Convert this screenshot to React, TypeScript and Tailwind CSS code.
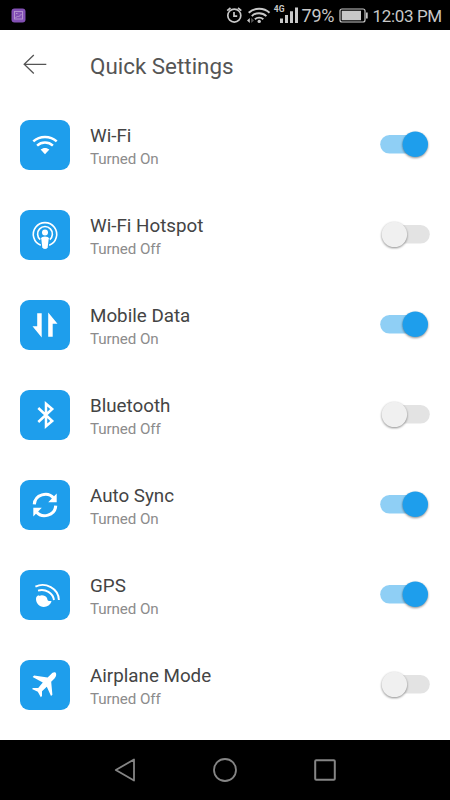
import React, { useState } from "react";

interface Setting {
  name: string;
  enabled: boolean;
  icon: React.ReactNode;
}

const WifiIcon = () => (
  <g>
    <g fill="none" stroke="white" strokeWidth="2.5">
      <path d="M13.3 21.4C19.8 15.4 30.2 15.4 36.7 21.4" />
      <path d="M17.1 25.6C21.6 21.5 28.4 21.5 32.9 25.6" />
    </g>
    <path d="M20.6 29.6C23.2 27.3 26.8 27.3 29.4 29.6L25 34.2Z" fill="white" />
  </g>
);

const HotspotIcon = () => (
  <g>
    <g fill="none" stroke="white" strokeWidth="1.6">
      <path d="M20.8 35.2A11.7 11.7 0 1 1 29.2 35.2" />
      <path d="M20.2 29.6A7.4 7.4 0 1 1 29.8 29.6" />
    </g>
    <circle cx="25" cy="22.5" r="3" fill="white" />
    <path d="M21.2 28.2Q21.6 26.6 25 26.6T28.8 28.2L27.7 37.2Q27.4 39 25 39T22.3 37.2Z" fill="white" />
  </g>
);

const DataIcon = () => (
  <path d="M17.2 13.3H21.7V37.5L12.5 26.3H17.2ZM28.2 12.5V36.7H32.7V23.7H37.5Z" fill="white" />
);

const BluetoothIcon = () => (
  <path
    d="M18.3 18L32.2 31L26 36.2V13.8L32.2 19L18.3 32"
    fill="none"
    stroke="white"
    strokeWidth="2.5"
  />
);

const SyncIcon = () => (
  <g>
    <g fill="none" stroke="white" strokeWidth="3.1">
      <path d="M14.3 24.3C14.8 14.6 27.8 10.9 33.7 18.2" />
      <path d="M35.7 25.7C35.2 35.4 22.2 39.1 16.3 31.8" />
    </g>
    <path d="M36.7 13.6V22.2H28.2ZM13.3 36.4V27.8H21.8Z" fill="white" />
  </g>
);

const GpsIcon = () => (
  <g>
    <g fill="none" stroke="white" strokeWidth="1.9">
      <path d="M15.4 16.6C25.5 11.7 38.5 18.5 38.9 30" />
      <path d="M18 20.6C25.5 18.5 33 23 34 30" />
    </g>
    <path
      d="M18.3 25.3C19.4 26.2 20.6 25.8 21.8 25.3C24 25.5 26 26.1 27 28C27.4 29.3 27.3 30 28.3 30.8C29.4 31.5 30.6 30.7 31.6 31.5C30.2 34.9 27.4 36.9 23.8 36.9C19.2 36.9 16 33.2 16 29C16 27.3 16.8 26.2 18.3 25.3Z"
      fill="white"
    />
  </g>
);

const AirplaneIcon = () => (
  <path
    d="M35.5 12.6C33.8 11.8 32.2 13 31 14.2L27.6 17.4L14.1 15.6L12.6 17.1L22.8 22.6L18.2 28H13L12 29.1L17.8 31.7L20.8 37.2L22 36.1V31.2L26.8 26.7L31 36.1L32.4 34.8L31.2 21.8L34.5 18.5C35.8 17.2 37 14.4 35.5 12.6Z"
    fill="white"
  />
);

const settings: Setting[] = [
  { name: "Wi-Fi", enabled: true, icon: <WifiIcon /> },
  { name: "Wi-Fi Hotspot", enabled: false, icon: <HotspotIcon /> },
  { name: "Mobile Data", enabled: true, icon: <DataIcon /> },
  { name: "Bluetooth", enabled: false, icon: <BluetoothIcon /> },
  { name: "Auto Sync", enabled: true, icon: <SyncIcon /> },
  { name: "GPS", enabled: true, icon: <GpsIcon /> },
  { name: "Airplane Mode", enabled: false, icon: <AirplaneIcon /> },
];

const StatusBar = () => (
  <div className="h-[30px] bg-black text-[#c8c8c8] flex items-center">
    <svg className="ml-[11px] shrink-0" width="15" height="15" viewBox="0 0 15 15">
      <rect x="0.5" y="0.5" width="14" height="14" rx="3" fill="#8250b4" />
      <g fill="none" stroke="#b99ad0" strokeWidth="0.9">
        <rect x="3.5" y="3.5" width="8" height="7.5" />
        <path d="M4.5 10L6.5 8L7.5 9L10.5 6M5 5.5H6.5" />
      </g>
    </svg>
    {/* Alarm, Wi-Fi and mobile signal */}
    <svg className="ml-[200px] shrink-0" width="74" height="30" viewBox="226 0 74 30">
      <g fill="none" stroke="#c8c8c8" strokeWidth="1.7">
        <circle cx="234.3" cy="15.6" r="6.5" />
        <path d="M234 12V16.2H237.2M227.2 10.7L230.5 8M241.3 10.7L238 8" />
      </g>
      <g fill="none" stroke="#c8c8c8" strokeWidth="1.9">
        <path d="M248.7 12.7C254.2 7.4 264 7.4 269.5 12.7" />
        <path d="M251.8 16.1C255.8 12.2 262.4 12.2 266.4 16.1" />
        <path d="M254.9 19.3C257.3 17.1 261 17.1 263.3 19.3" />
      </g>
      <circle cx="259.2" cy="21.4" r="1.7" fill="#c8c8c8" />
      <path d="M247 20.5L249.8 18V23Z" fill="#c8c8c8" />
      <path d="M251.2 18L254 20.5L251.2 23Z" fill="#555555" />
      <path
        d="M280 18.5H283V23H280ZM285 15H288V23H285ZM290 11.3H293V23H290ZM295 7.5H298V23H295Z"
        fill="#c8c8c8"
      />
      <text x="273.8" y="11.5" fill="#c8c8c8" fontSize="8.5" fontWeight="700">
        4G
      </text>
    </svg>
    <span className="ml-[1.5px] w-[36.5px] text-[18px] leading-[30px] pt-[1px] tracking-[-0.2px] whitespace-nowrap">
      79%
    </span>
    <svg className="shrink-0" width="30" height="30" viewBox="338 0 30 30">
      <rect x="340" y="9" width="25" height="13" rx="2" fill="none" stroke="#c8c8c8" strokeWidth="1.2" />
      <path d="M341.7 10.7H361V20.3H341.7ZM366 12.5H367.7V18.5H366Z" fill="#c8c8c8" />
    </svg>
    <span className="ml-[4.5px] text-[17px] leading-[30px] pt-[1px] tracking-[-0.35px] whitespace-nowrap">
      12:03 PM
    </span>
  </div>
);

interface ToggleProps {
  name: string;
  enabled: boolean;
  onClick: () => void;
}

const Toggle: React.FC<ToggleProps> = ({ name, enabled, onClick }) => (
  <button
    className="w-[50px] pb-[2px]"
    onClick={onClick}
    role="switch"
    aria-checked={enabled}
    aria-label={name}
  >
    <svg className="block overflow-visible" width="50" height="26" viewBox="0 0 50 26">
      {enabled ? (
        <>
          <rect x="0.2" y="4" width="44" height="18.6" rx="9.3" fill="#8fcff5" />
          <circle cx="35.3" cy="13.3" r="12.7" fill="#1e9eec" className="drop-shadow-[0_1px_1px_rgba(0,0,0,0.45)]" />
        </>
      ) : (
        <>
          <rect x="4" y="4" width="45.8" height="18.6" rx="9.3" fill="#e3e3e3" />
          <circle cx="14.4" cy="13.4" r="12.7" fill="#f0f0f0" className="drop-shadow-[0_1px_1px_rgba(0,0,0,0.45)]" />
        </>
      )}
    </svg>
  </button>
);

const NavBar = () => (
  <div className="h-[60px] bg-black flex items-center justify-center gap-[70px]">
    <svg width="30" height="30" viewBox="0 0 30 30" fill="none" stroke="#858585" strokeWidth="1.8" strokeLinejoin="round">
      <path d="M5.8 15L24 4.5V25.5Z" />
    </svg>
    <svg width="30" height="30" viewBox="0 0 30 30" fill="none" stroke="#858585" strokeWidth="1.8">
      <circle cx="15" cy="15" r="11" />
    </svg>
    <svg width="30" height="30" viewBox="0 0 30 30" fill="none" stroke="#858585" strokeWidth="2">
      <rect x="5.2" y="5.2" width="19.6" height="19.6" rx="1" />
    </svg>
  </div>
);

const App: React.FC = () => {
  const [items, setItems] = useState(settings);

  const toggle = (name: string) =>
    setItems(items.map((s) => (s.name === name ? { ...s, enabled: !s.enabled } : s)));

  return (
    <div className="w-[450px] h-[800px] bg-white font-[Roboto,sans-serif] flex flex-col overflow-hidden">
      <StatusBar />
      <header className="h-[70px] pl-5 flex items-center">
        <svg width="30" height="30" viewBox="20 50 30 30" fill="none" stroke="#555555" strokeWidth="1.3">
          <path d="M46.3 64.3H24M33.8 55L24.2 64.3L33.8 73.5" />
        </svg>
        <h1 className="ml-10 pt-[1px] text-[22.4px] leading-[34px] text-[#555555]">Quick Settings</h1>
      </header>
      <main className="flex-1">
        {items.map((s) => (
          <div key={s.name} className="h-[90px] px-5 flex items-center">
            <svg className="shrink-0 rounded-[9px] bg-[#1e9eec]" width="50" height="50" viewBox="0 0 50 50">
              {s.icon}
            </svg>
            <div className="ml-5 flex-1 pt-1">
              <div className="text-[18.8px] leading-[24px] text-[#444444]">{s.name}</div>
              <div className="text-[15.2px] leading-[22px] tracking-[-0.1px] text-[#8c8c8c]">
                {s.enabled ? "Turned On" : "Turned Off"}
              </div>
            </div>
            <Toggle name={s.name} enabled={s.enabled} onClick={() => toggle(s.name)} />
          </div>
        ))}
      </main>
      <NavBar />
    </div>
  );
};

export default App;
